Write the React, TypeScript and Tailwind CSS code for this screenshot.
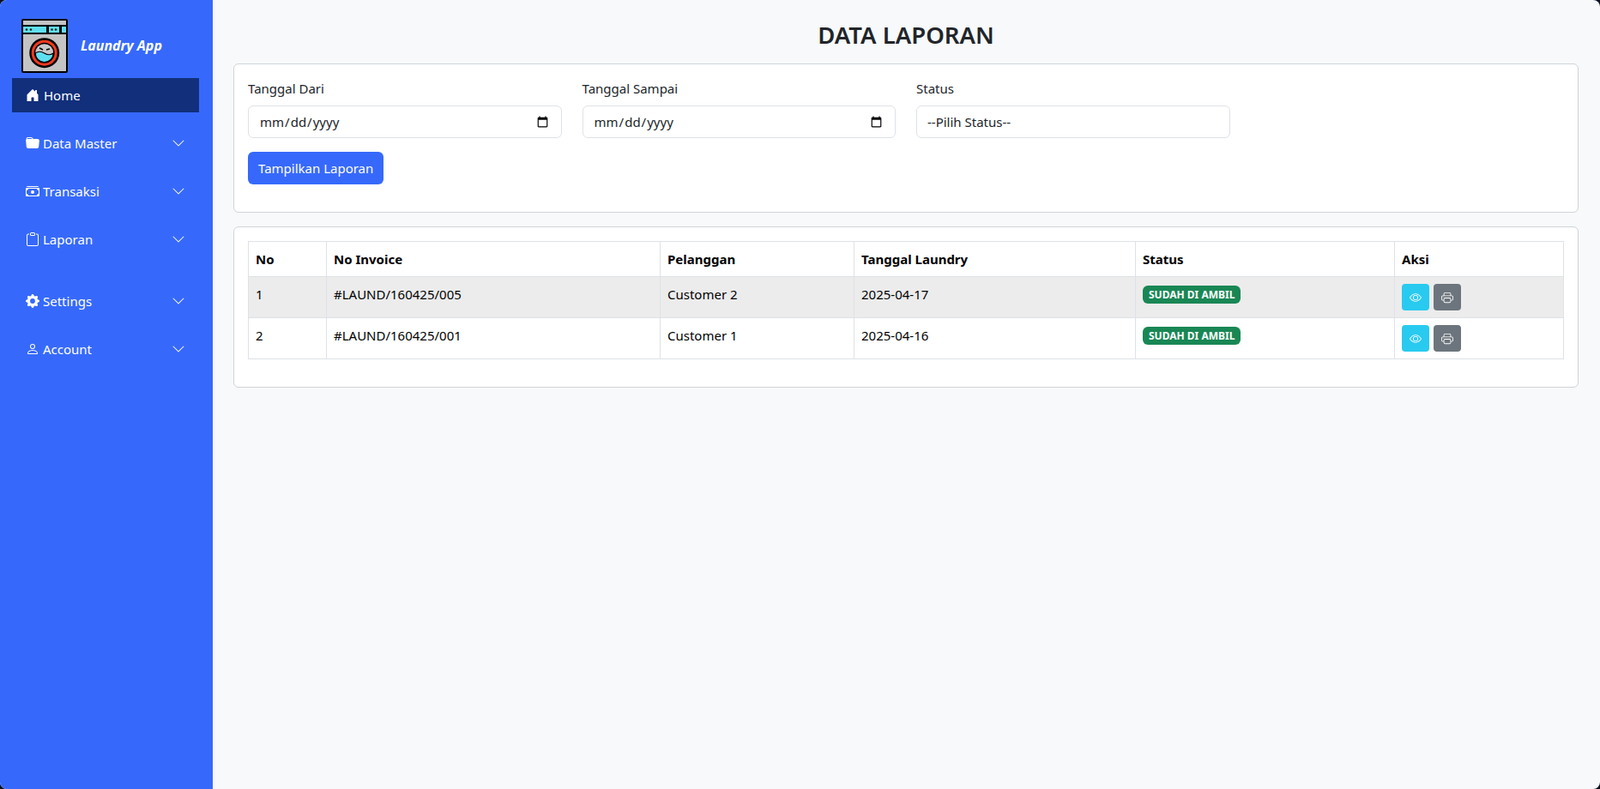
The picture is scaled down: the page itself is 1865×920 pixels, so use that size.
import { BsCashStack, BsChevronDown, BsClipboard, BsEye, BsFolderFill, BsGearFill, BsHouseDoorFill, BsPerson, BsPrinter } from 'react-icons/bs';
import type { IconType } from 'react-icons';

interface MenuItem {
  label: string;
  icon: IconType;
  className: string;
}

const menu: MenuItem[] = [
  { label: 'Data Master', icon: BsFolderFill, className: 'mt-[16px]' },
  { label: 'Transaksi', icon: BsCashStack, className: 'mt-[16px]' },
  { label: 'Laporan', icon: BsClipboard, className: 'mt-[16px]' },
  { label: 'Settings', icon: BsGearFill, className: 'mt-[32px]' },
  { label: 'Account', icon: BsPerson, className: 'mt-[16px]' },
];

const rows = [
  { no: 1, invoice: '#LAUND/160425/005', customer: 'Customer 2', date: '2025-04-17', striped: true },
  { no: 2, invoice: '#LAUND/160425/001', customer: 'Customer 1', date: '2025-04-16', striped: false },
];

const WasherLogo = () => (
  <svg viewBox="0 0 54 63" className="w-[54px] h-[63px] shrink-0">
    <rect x="1" y="1" width="52" height="61" rx="1" fill="#c4c4c4" stroke="#000" strokeWidth="2" />
    <rect x="2" y="7" width="50" height="11" fill="#000" />
    <rect x="2" y="9" width="27" height="7" fill="#5fe0f0" />
    <rect x="32" y="9" width="12" height="7" fill="#5fe0f0" />
    <rect x="47" y="9" width="5" height="7" fill="#5fe0f0" />
    <circle cx="6" cy="12.5" r="1.3" fill="#222" />
    <circle cx="11" cy="12.5" r="1.3" fill="#222" />
    <circle cx="35.5" cy="12.5" r="1.3" fill="#222" />
    <circle cx="40" cy="12.5" r="1.3" fill="#222" />
    <circle cx="26.7" cy="39.7" r="17.5" fill="#000" />
    <circle cx="26.7" cy="39.7" r="15" fill="#f03a1e" />
    <circle cx="26.7" cy="39.7" r="12" fill="#000" />
    <circle cx="26.7" cy="39.7" r="10.5" fill="#c8c8c8" />
    <path d="M16.2 40 q5 -3.5 10.5 0 t10.5 0 a10.5 10.5 0 0 1 -21 0z" fill="#5fe0f0" stroke="#000" strokeWidth="1.2" />
    <path d="M21 34l4 2M29 36l4-1" stroke="#000" strokeWidth="1.6" />
  </svg>
);

const labelClass = 'block text-[15px] leading-[24px] text-[#212529] mb-2';
const inputClass = 'block w-full h-[38px] px-3 text-[15px] text-[#212529] bg-white border border-[#dee2e6] rounded-md outline-none';
const cellClass = 'border border-[#dee2e6] px-2 pt-2 align-top';

const App = () => {
  return (
    <div className="bg-[#0b1020]">
      <div className="flex min-h-[920px] rounded-lg overflow-hidden bg-[#f8f9fa] font-['Noto_Sans','Open_Sans',sans-serif]">
        <aside className="w-[248px] shrink-0 bg-[#3669fb] text-white pl-[14px] pr-[16px]">
          <div className="flex items-center h-[91px] pt-[16px] pl-[11px]">
            <WasherLogo />
            <span className="ml-[15px] -mt-[2px] text-[16px] font-bold italic">Laundry App</span>
          </div>
          <a className="flex items-center h-[40px] bg-[#112f7b] pl-[16px] text-[15px]">
            <BsHouseDoorFill className="w-[16px] h-[16px] mr-[5px]" />
            Home
          </a>
          {menu.map(({ label, icon: Icon, className }) => (
            <a key={label} className={`flex items-center h-[40px] pl-[16px] pr-[16px] text-[15px] ${className}`}>
              <Icon className="w-[16px] h-[16px] mr-[4px]" />
              <span className="flex-1">{label}</span>
              <BsChevronDown className="w-[16px] h-[16px]" />
            </a>
          ))}
        </aside>

        <main className="flex-1 pl-[24px] pr-[25px]">
          <h1 className="text-center text-[27.5px] leading-[34px] font-semibold text-[#212529] pt-[24px] mb-[16px]">DATA LAPORAN</h1>

          <section className="bg-white border border-[#ced4da] rounded-md p-4 h-[174px]">
            <div className="grid grid-cols-4 gap-x-6">
              <div>
                <label className={labelClass}>Tanggal Dari</label>
                <input type="date" className={inputClass} />
              </div>
              <div>
                <label className={labelClass}>Tanggal Sampai</label>
                <input type="date" className={inputClass} />
              </div>
              <div>
                <label className={labelClass}>Status</label>
                <select className={`${inputClass} appearance-none`}>
                  <option>--Pilih Status--</option>
                </select>
              </div>
            </div>
            <button className="mt-4 h-[38px] px-3 bg-[#3669fb] text-white text-[15px] rounded-md">Tampilkan Laporan</button>
          </section>

          <section className="mt-4 bg-white border border-[#ced4da] rounded-md p-4 h-[188px]">
            <table className="w-full table-fixed border-collapse text-[15px] leading-6 text-black">
              <colgroup>
                <col className="w-[91px]" />
                <col className="w-[389px]" />
                <col className="w-[226px]" />
                <col className="w-[328px]" />
                <col className="w-[302px]" />
                <col />
              </colgroup>
              <thead>
                <tr className="h-[41px]">
                  {['No', 'No Invoice', 'Pelanggan', 'Tanggal Laundry', 'Status', 'Aksi'].map((h) => (
                    <th key={h} className="border border-[#dee2e6] px-2 text-left font-bold">{h}</th>
                  ))}
                </tr>
              </thead>
              <tbody>
                {rows.map((row) => (
                  <tr key={row.no} className={`h-[48px] ${row.striped ? 'bg-[#ececec]' : 'bg-white'}`}>
                    <td className={cellClass}>{row.no}</td>
                    <td className={cellClass}>{row.invoice}</td>
                    <td className={cellClass}>{row.customer}</td>
                    <td className={cellClass}>{row.date}</td>
                    <td className="border border-[#dee2e6] px-2 pt-[10px] align-top">
                      <span className="flex w-fit items-center h-[21px] px-[7px] rounded-md bg-[#198754] text-white text-[12px] font-bold">SUDAH DI AMBIL</span>
                    </td>
                    <td className="border border-[#dee2e6] px-2 pt-2 align-top">
                      <div className="flex gap-[5px]">
                        <button className="w-[32px] h-[31px] flex items-center justify-center rounded bg-[#29caf0] text-white">
                          <BsEye className="w-[14px] h-[14px]" />
                        </button>
                        <button className="w-[32px] h-[31px] flex items-center justify-center rounded bg-[#6c757d] text-white">
                          <BsPrinter className="w-[14px] h-[14px]" />
                        </button>
                      </div>
                    </td>
                  </tr>
                ))}
              </tbody>
            </table>
          </section>
        </main>
      </div>
    </div>
  );
};

export default App;
